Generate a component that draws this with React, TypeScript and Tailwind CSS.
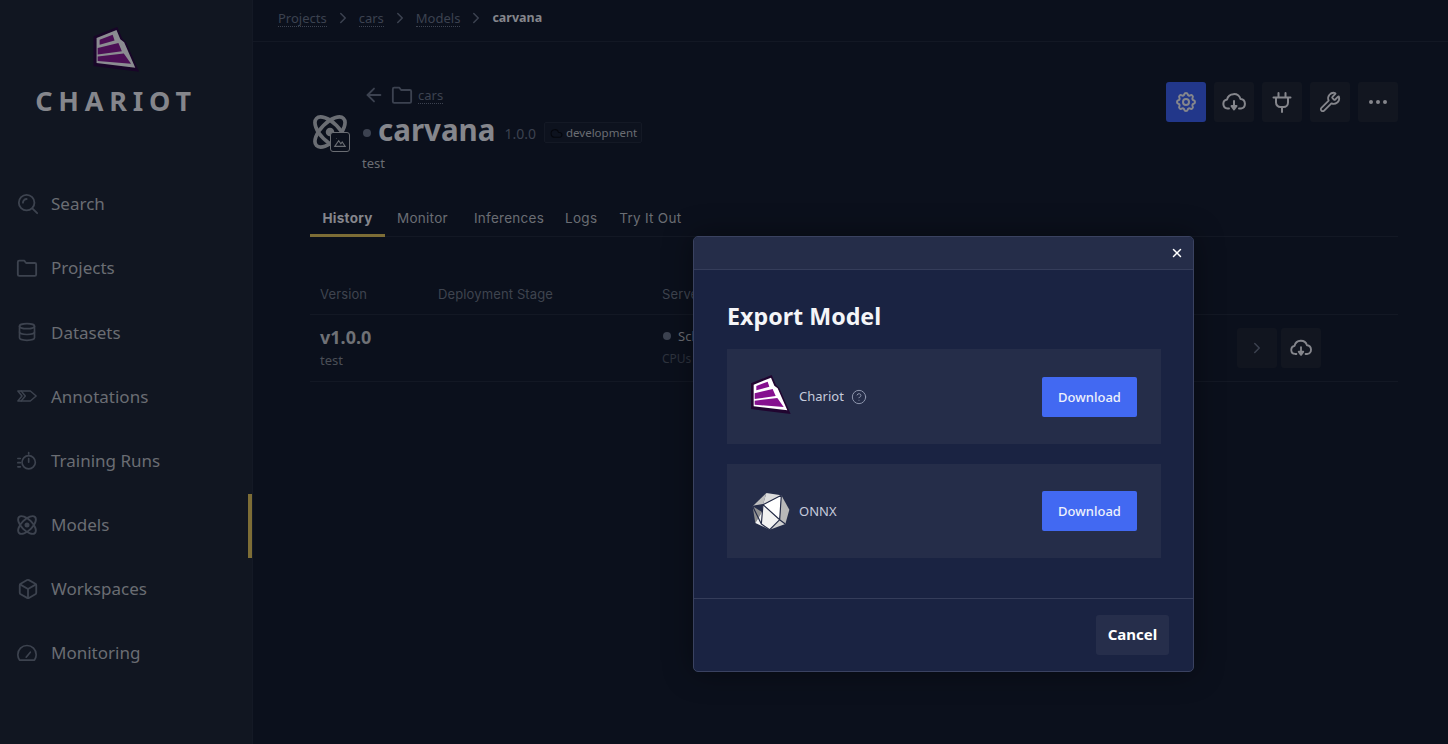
import React from "react";
import { ChevronRight, ArrowLeft, Database, Box, X, MoreHorizontal, Cloud, CircleHelp, Wrench } from "lucide-react";
import { TbSettings } from "react-icons/tb";

const S = { width: 24, height: 24, viewBox: "0 0 24 24", fill: "none", stroke: "currentColor", strokeWidth: 2, strokeLinecap: "round" as const, strokeLinejoin: "round" as const };

function SearchIcon() {
  return (
    <svg {...S} className="h-[22px] w-[22px]">
      <circle cx="10.5" cy="10.5" r="8.5" />
      <path d="M6.5 10.5a4 4 0 0 1 4-4" />
      <path d="M17 17l5 5" />
    </svg>
  );
}
function FolderIcon({ className }: { className: string }) {
  return (
    <svg {...S} className={className}>
      <path d="M2 5.500a1.500 1.500 0 0 1 1.500-1.500H9l2 2.500h9.500A1.500 1.500 0 0 1 22 8v11a1.500 1.500 0 0 1-1.500 1.500h-17A1.500 1.500 0 0 1 2 19z" />
    </svg>
  );
}
function TagsIcon() {
  return (
    <svg {...S} className="h-5 w-5" strokeWidth={1.7}>
      <path d="M1 6h15l7 6-7 6H1l5-6z" />
      <path d="M5 6l5 6-5 6" />
    </svg>
  );
}
function TimerIcon() {
  return (
    <svg {...S} className="h-5 w-5">
      <circle cx="14" cy="13.500" r="8" />
      <path d="M14 13.500V9M14 2v1.500M1 9h3M1 14h3M1 19h3" />
    </svg>
  );
}
function AtomIcon({ className, sw = 2 }: { className: string; sw?: number }) {
  return (
    <svg {...S} className={className} strokeWidth={sw}>
      <circle cx="12" cy="12" r="3" fill="currentColor" stroke="none" />
      <ellipse cx="12" cy="12" rx="13.500" ry="6.500" transform="rotate(45 12 12)" />
      <ellipse cx="12" cy="12" rx="13.500" ry="6.500" transform="rotate(-45 12 12)" />
    </svg>
  );
}
function GaugeIcon() {
  return (
    <svg {...S} className="h-5 w-5">
      <path d="M3 20.500A11 11 0 0 1 1 14a11 11 0 0 1 22 0 11 11 0 0 1-2 6.500z" />
      <path d="M11 17l5-6" />
    </svg>
  );
}
function CloudDown({ className }: { className: string }) {
  return (
    <svg {...S} className={className}>
      <path d="M7 18.500H5.500A4.500 4.500 0 0 1 5 9.600 7 7 0 0 1 18.500 9 4.800 4.800 0 0 1 19 18.500h-2" />
      <path d="M12 11v6" />
      <path d="M9.500 16h5L12 19.500z" fill="currentColor" />
    </svg>
  );
}
function PlugIcon() {
  return (
    <svg {...S} className="h-6 w-6">
      <path d="M8.500 3v4.500M15.500 3v4.500M3.500 7.500h17M6 7.500v5a4.500 4.500 0 0 0 4.500 4.500h3a4.500 4.500 0 0 0 4.500-4.500v-5M12 17v5" />
    </svg>
  );
}
function ChariotLogo({ className, dim }: { className: string; dim?: boolean }) {
  const white = dim ? "#8b8c91" : "#ffffff";
  const purple = dim ? "#4c0f56" : "#85108f";
  const outer = dim ? "#180528" : "#210530";
  return (
    <svg viewBox="0 0 120 120" className={className}>
      <polygon points="0,25 62,0 75,30 85,40 119,117 0,102" fill={outer} />
      <polygon points="8,29 60,8 70,32 80,40 109,106 8,94" fill={white} />
      <polygon points="16,33 50,20 55,35 16,46" fill={purple} />
      <polygon points="11,55 65,42 74,63 11,72" fill={purple} />
      <polygon points="11,77 79,69 98,96 11,89" fill={purple} />
    </svg>
  );
}
function OnnxLogo() {
  return (
    <svg viewBox="0 0 138 138" className="h-[46px] w-[46px] shrink-0">
      <polygon points="55,15 14,55 45,50" fill="#bdbdbd" />
      <polygon points="55,15 100,22 45,50" fill="#dcdcdc" />
      <polygon points="45,50 100,22 95,95" fill="#ffffff" />
      <polygon points="100,22 124,65 112,108 95,95" fill="#b9b9b9" />
      <polygon points="14,55 22,105 42,72" fill="#8f8f8f" />
      <polygon points="45,50 42,72 22,105 65,125 95,95" fill="#f2f2f2" />
      <polygon points="65,125 112,108 95,95" fill="#cfcfcf" />
      <path d="M14 55 45 50 100 22M45 50 95 95 100 22M45 50 40 108 65 125 95 95 112 108M14 55 40 108" stroke="#252c48" strokeWidth="3.500" fill="none" />
    </svg>
  );
}

const nav: [string, React.ReactNode][] = [
  ["Search", <SearchIcon />],
  ["Projects", <div className="-ml-px"><FolderIcon className="h-[22px] w-[22px]" /></div>],
  ["Datasets", <Database className="h-5 w-5" />],
  ["Annotations", <TagsIcon />],
  ["Training Runs", <TimerIcon />],
  ["Models", <AtomIcon className="h-5 w-5" sw={2.3} />],
  ["Workspaces", <Box className="h-[22px] w-[22px]" />],
  ["Monitoring", <GaugeIcon />],
];

function IconBtn({ children, active }: { children: React.ReactNode; active?: boolean }) {
  return (
    <div className={`flex h-10 w-10 items-center justify-center rounded-[3px] text-[#85868c] ${active ? "bg-[#22378a]" : "bg-[#121620]"}`}>
      {children}
    </div>
  );
}

function ExportRow({ logo, name, help }: { logo: React.ReactNode; name: string; help?: boolean }) {
  return (
    <div className="flex h-[94.5px] items-center justify-between bg-[#252d49] pl-6 pr-6">
      <div className="mt-[1px] flex items-center">
        <div className="flex w-[48px] items-center">{logo}</div>
        <span className="text-[13px] text-[#c5cbdc]">{name}</span>
        {help && <CircleHelp className="ml-[7px] h-4 w-4 text-[#8d95ac]" strokeWidth={1.5} />}
      </div>
      <div className="mt-[1px] flex h-10 w-[95px] items-center justify-center rounded-[2px] bg-[#4269f2] pt-px text-[13px] font-medium text-[#eef1fb]">Download</div>
    </div>
  );
}

export default function App() {
  return (
    <div className="relative flex h-[744px] w-[1448px] overflow-hidden bg-[#0b101c] font-['Noto_Sans',sans-serif]">
      <aside className="flex h-full w-[253px] shrink-0 flex-col border-r border-[#141925] bg-[#111621]">
        <div className="flex h-[172px] flex-col items-center pr-[20px] pt-[27px]">
          <ChariotLogo className="h-[46px] w-[47px]" dim />
          <div className="mt-[11px] text-[27px] font-bold leading-[34px] tracking-[0.215em] text-[#85868c]">CHARIOT</div>
        </div>
        {nav.map(([label, icon]) => (
          <div key={label} className="relative flex h-[64.15px] items-center pl-[17px]">
            <div className="flex w-[34px] items-center text-[#3d434f]">{icon}</div>
            <span className="text-[17px] text-[#6a6d73]">{label}</span>
            {label === "Models" && <div className="absolute right-0 top-[1.25px] h-[64px] w-1 bg-[#7d6d36]" />}
          </div>
        ))}
      </aside>
      <main className="flex-1">
        <nav className="flex h-[42px] items-center gap-[7px] border-b border-[#131824] pb-[5px] pl-[25px] text-[13px] text-[#3c4250]">
          <span className="border-b border-dotted border-[#3c4250] leading-[16px]">Projects</span>
          <ChevronRight className="h-[18px] w-[18px] text-[#3c4250]" />
          <span className="border-b border-dotted border-[#3c4250] leading-[16px]">cars</span>
          <ChevronRight className="h-[18px] w-[18px] text-[#3c4250]" />
          <span className="border-b border-dotted border-[#3c4250] leading-[16px]">Models</span>
          <ChevronRight className="h-[18px] w-[18px] text-[#3c4250]" />
          <span className="text-[12.5px] font-bold text-[#85868c]">carvana</span>
        </nav>
        <section className="pl-[57px] pr-[50px]">
          <div className="flex justify-between">
            <div className="flex pt-[40px]">
              <div className="relative ml-[3px] mr-[15px] mt-[33px] h-[38px] w-[34px] text-[#6a6d73]">
                <AtomIcon className="h-[34px] w-[34px]" sw={2.6} />
                <div className="absolute left-[17px] top-[17px] flex h-[20px] w-[20px] items-center justify-center rounded-[3px] border border-[#6a6d73] bg-[#0b101c]">
                  <svg viewBox="0 0 16 16" className="h-[14px] w-[14px]" fill="none" stroke="currentColor" strokeWidth="1.200"><path d="M2 13 6.500 6.500 9 10l1.500-2L14 13zM4 4h.500" /></svg>
                </div>
              </div>
              <div>
                <div className="flex h-[26px] items-center text-[#3c4250]">
                  <ArrowLeft className="ml-[1px] h-[22px] w-[22px]" />
                  <FolderIcon className="ml-[6px] h-[22px] w-[22px]" />
                  <span className="ml-[5px] mt-[1px] border-b border-dotted border-[#3c4250] text-[13px] leading-[16px]">cars</span>
                </div>
                <div className="flex h-[44px] items-center">
                  <span className="mt-[6px] ml-[1px] h-2 w-2 rounded-full bg-[#3c4250]" />
                  <span className="ml-[7px] text-[29.5px] font-bold leading-[40px] text-[#85868c]">carvana</span>
                  <span className="ml-[9px] mt-[6px] text-[14px] text-[#3c4250]">1.0.0</span>
                  <span className="ml-2 mt-[5px] flex h-[21px] items-center gap-[3px] rounded-[2px] border border-[#141925] bg-[#0d121e] pl-[5px] pr-[4px] pt-px text-[11.5px] text-[#6a6d73]">
                    <Cloud className="h-[13px] w-[13px] text-[#05070d]" strokeWidth={2} />
                    development
                  </span>
                </div>
                <div className="mt-px text-[13px] leading-[20px] text-[#6a6d73]">test</div>
              </div>
            </div>
            <div className="flex gap-2 pt-[40px]">
              <IconBtn active><TbSettings className="h-6 w-6" /></IconBtn>
              <IconBtn><CloudDown className="h-6 w-6" /></IconBtn>
              <IconBtn><PlugIcon /></IconBtn>
              <IconBtn><Wrench className="h-[22px] w-[22px]" /></IconBtn>
              <IconBtn><MoreHorizontal className="h-6 w-6" /></IconBtn>
            </div>
          </div>
          <div className="mt-[30px] flex h-[34px] border-b border-[#131824] font-['Inter',sans-serif] text-[13.5px] text-[#6a6d73]">
            <div className="flex h-[34px] w-[75px] items-center justify-center border-b-[3px] border-[#7d6d36] pb-[1px] font-bold tracking-[0.02em] text-[#85868c]">History</div>
            <div className="ml-[12px] flex items-center pb-[2px] tracking-[0.02em]">Monitor</div>
            <div className="ml-[26px] flex items-center pb-[2px] tracking-[0.02em]">Inferences</div>
            <div className="ml-[21px] flex items-center pb-[2px] tracking-[0.02em]">Logs</div>
            <div className="ml-[22px] flex items-center pb-[2px] tracking-[0.02em]">Try It Out</div>
          </div>
          <div className="mt-[38px] grid h-[40px] grid-cols-[118px_224px_1fr] items-center border-b border-[#131824] pl-[10px] font-['Inter',sans-serif] text-[13px] tracking-[0.01em] text-[#3f444f]">
            <span>Version</span>
            <span>Deployment Stage</span>
            <span>Server</span>
          </div>
          <div className="grid h-[67px] grid-cols-[118px_224px_1fr_auto] items-center border-b border-[#131824] pl-[10px] pr-[77px]">
            <div className="mb-[2px]">
              <div className="text-[18px] font-bold leading-[24px] text-[#6f7176]">v1.0.0</div>
              <div className="mt-[2px] text-[13px] leading-[18px] text-[#4a4e56]">test</div>
            </div>
            <div />
            <div className="mb-[1px]">
              <div className="flex items-center gap-[7px] text-[13px] leading-[18px] text-[#6a6d73]"><span className="ml-[1px] h-[8px] w-[8px] rounded-full bg-[#3c4250]" />Scheduled</div>
              <div className="mt-[5px] text-[12px] leading-[18px] text-[#2e333e]">CPUs</div>
            </div>
            <div className="flex gap-1">
              <div className="flex h-10 w-10 items-center justify-center rounded-[3px] bg-[#11151f] text-[#3c4250]"><ChevronRight className="h-[18px] w-[18px]" /></div>
              <div className="flex h-10 w-10 items-center justify-center rounded-[3px] bg-[#121620] text-[#85868c]"><CloudDown className="h-[22px] w-[22px]" /></div>
            </div>
          </div>
        </section>
      </main>

      <div className="absolute left-[693px] top-[236px] flex h-[436px] w-[501px] flex-col overflow-hidden rounded-[5px] border border-[#3a4260] bg-[#1a2342] shadow-[0_0_30px_rgba(0,0,0,0.4)]">
        <div className="flex h-[33px] shrink-0 items-center justify-end border-b border-[#353d5a] bg-[#252d49] pr-[9px]">
          <X className="h-[14px] w-[14px] text-white" strokeWidth={2.5} />
        </div>
        <div className="flex flex-1 flex-col pl-[33px] pr-[32px]">
          <h2 className="mt-[29px] text-[23.25px] font-bold leading-[34px] text-[#f4f5f8]">Export Model</h2>
          <div className="mt-[16px] flex flex-col gap-[20px]">
            <ExportRow logo={<ChariotLogo className="-mt-[3px] h-[40px] w-[40px]" />} name="Chariot" help />
            <ExportRow logo={<div className="-ml-[3px]"><OnnxLogo /></div>} name="ONNX" />
          </div>
        </div>
        <div className="flex h-[73px] shrink-0 items-center justify-end border-t border-[#353d5a] pr-[24px]">
          <div className="flex h-10 w-[73px] items-center justify-center rounded-[3px] bg-[#262e4b] pb-[1px] text-[15px] font-bold text-white">Cancel</div>
        </div>
      </div>
    </div>
  );
}
